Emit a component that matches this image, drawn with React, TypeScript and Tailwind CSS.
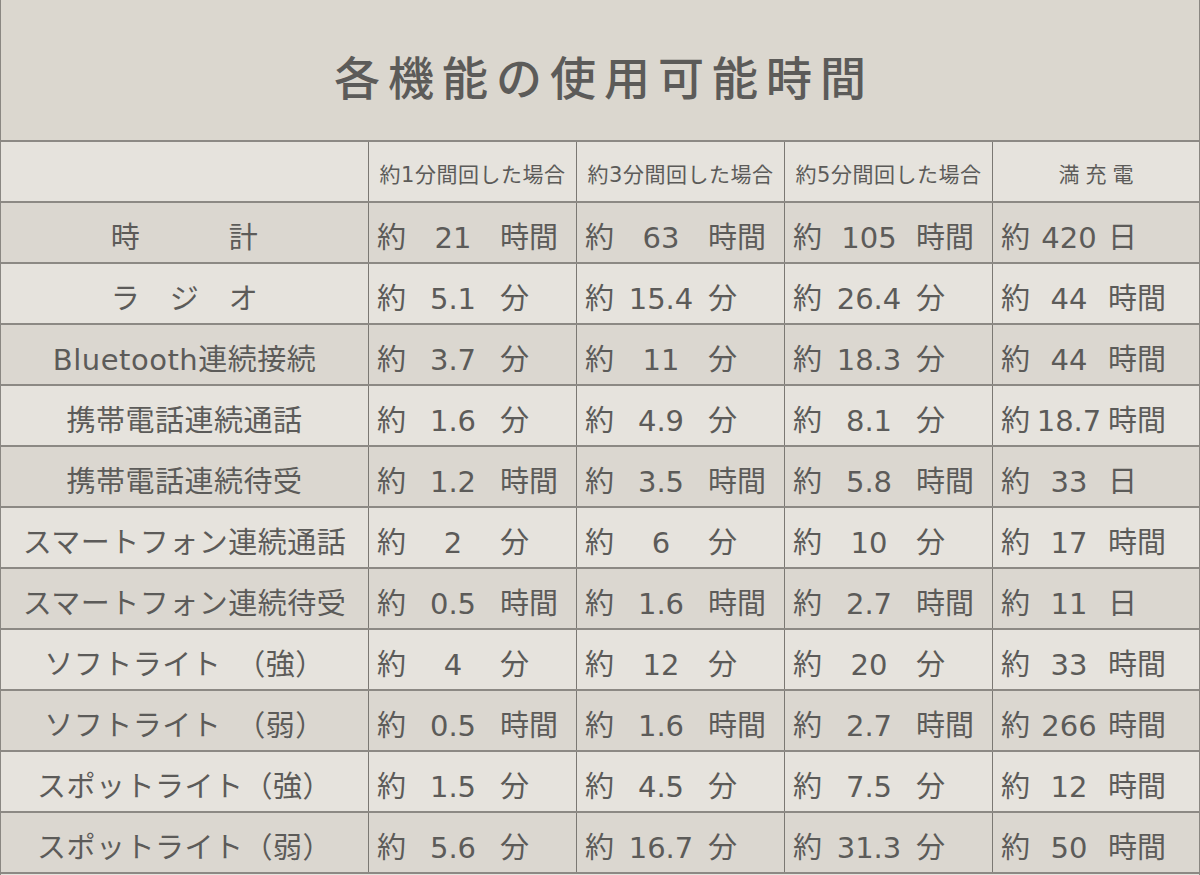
import React from 'react';

type Cell = [string, string];

const rows: { label: string; cells: Cell[] }[] = [
  { label: '時　　　計', cells: [['21', '時間'], ['63', '時間'], ['105', '時間'], ['420', '日']] },
  { label: 'ラ　ジ　オ', cells: [['5.1', '分'], ['15.4', '分'], ['26.4', '分'], ['44', '時間']] },
  { label: 'Bluetooth連続接続', cells: [['3.7', '分'], ['11', '分'], ['18.3', '分'], ['44', '時間']] },
  { label: '携帯電話連続通話', cells: [['1.6', '分'], ['4.9', '分'], ['8.1', '分'], ['18.7', '時間']] },
  { label: '携帯電話連続待受', cells: [['1.2', '時間'], ['3.5', '時間'], ['5.8', '時間'], ['33', '日']] },
  { label: 'スマートフォン連続通話', cells: [['2', '分'], ['6', '分'], ['10', '分'], ['17', '時間']] },
  { label: 'スマートフォン連続待受', cells: [['0.5', '時間'], ['1.6', '時間'], ['2.7', '時間'], ['11', '日']] },
  { label: 'ソフトライト　（強）', cells: [['4', '分'], ['12', '分'], ['20', '分'], ['33', '時間']] },
  { label: 'ソフトライト　（弱）', cells: [['0.5', '時間'], ['1.6', '時間'], ['2.7', '時間'], ['266', '時間']] },
  { label: 'スポットライト（強）', cells: [['1.5', '分'], ['4.5', '分'], ['7.5', '分'], ['12', '時間']] },
  { label: 'スポットライト（弱）', cells: [['5.6', '分'], ['16.7', '分'], ['31.3', '分'], ['50', '時間']] },
];

const headers = ['約1分間回した場合', '約3分間回した場合', '約5分間回した場合'];

const grid = 'grid grid-cols-[367px_208px_208px_208px_1fr]';

const ValueCell: React.FC<{ value: Cell; last: boolean }> = ({ value, last }) => (
  <div className="flex items-center pl-[8px] pt-[12px] border-l border-[#7b7873]">
    <span className="w-[29px] shrink-0">約</span>
    <span className={`${last ? 'w-[78px]' : 'w-[94px]'} shrink-0 text-center`}>{value[0]}</span>
    <span className="whitespace-nowrap">{value[1]}</span>
  </div>
);

export default function App() {
  return (
    <div
      className="w-[1200px] h-[875px] overflow-hidden border-x border-[#8a8782] bg-[#e6e3dd] text-[#5c5b59]"
      style={{ fontFamily: '"DejaVu Sans", "Noto Sans CJK JP", sans-serif' }}
    >
      <div className="h-[142px] flex items-center justify-center pt-[18px] bg-[#dbd7cf] border-b-2 border-[#8c8984]">
        <h1 className="text-[46px] tracking-[8px] pl-[8px] leading-none font-medium">各機能の使用可能時間</h1>
      </div>

      <div className={`${grid} h-[61px] bg-[#e6e3dd] border-b-2 border-[#8c8984] text-[21px] tracking-[0.5px]`}>
        <div />
        {headers.map((h) => (
          <div key={h} className="flex items-center justify-center pt-[8px] border-l border-[#7b7873] whitespace-nowrap">
            {h}
          </div>
        ))}
        <div className="flex items-center justify-center pt-[8px] border-l border-[#7b7873] tracking-[6px] pl-[6px]">
          満充電
        </div>
      </div>

      {rows.map((r, i) => (
        <div
          key={r.label}
          className={`${grid} h-[61px] border-b-2 border-[#8c8984] text-[29px] ${
            i % 2 === 0 ? 'bg-[#dbd7d0]' : 'bg-[#e6e3dd]'
          }`}
        >
          <div className="flex items-center justify-center pt-[12px] whitespace-nowrap tracking-[0.5px]">{r.label}</div>
          {r.cells.map((c, j) => (
            <ValueCell key={j} value={c} last={j === 3} />
          ))}
        </div>
      ))}
    </div>
  );
}
